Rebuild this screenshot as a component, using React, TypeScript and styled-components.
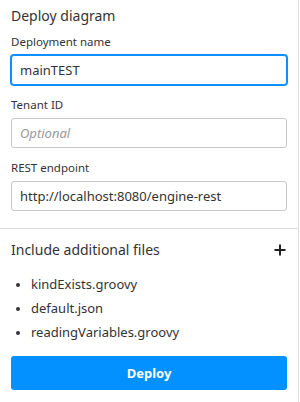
import React from "react";
import styled, { createGlobalStyle } from "styled-components";

const Global = createGlobalStyle`
  html, body { margin: 0; padding: 0; background: #fff; }
  body { font-family: "Noto Sans", "Open Sans", sans-serif; color: #333; }
  * { box-sizing: border-box; }
`;

const Panel = styled.div`
  width: 299px;
  height: 402px;
  border-right: 1px solid #dcdcdc;
  display: flex;
  flex-direction: column;
  background: #fff;
`;

const Section = styled.div<{ $top: number; $bottom: number; $border?: boolean }>`
  padding: ${(p) => p.$top}px 11px ${(p) => p.$bottom}px 11px;
  border-bottom: ${(p) => (p.$border ? "1px solid #dcdcdc" : "none")};
  display: flex;
  flex-direction: column;
`;

const Title = styled.h2`
  margin: 0;
  font-size: 14px;
  line-height: 20px;
  font-weight: 400;
  color: #333;
`;

const Field = styled.div<{ $top: number }>`
  display: flex;
  flex-direction: column;
  gap: 5px;
  margin-top: ${(p) => p.$top}px;
`;

const Label = styled.label`
  font-size: 11.5px;
  line-height: 16px;
  color: #333;
`;

const Input = styled.input<{ $focused?: boolean }>`
  height: 30px;
  width: 100%;
  border: 1px solid ${(p) => (p.$focused ? "#0d8fff" : "#c8c8c8")};
  box-shadow: ${(p) => (p.$focused ? "0 0 0 1px #0d8fff" : "none")};
  border-radius: 3px;
  padding: 0 8px;
  font-family: inherit;
  font-size: 13px;
  color: #333;
  caret-color: #222;
  outline: none;
  background: #fff;
  &::placeholder {
    color: #999;
    font-style: italic;
  }
`;

const Header = styled.div`
  display: flex;
  align-items: center;
  justify-content: space-between;
  height: 20px;
`;

const HeaderText = styled.span`
  font-size: 14px;
  line-height: 20px;
  color: #333;
`;

const PlusButton = styled.button`
  border: none;
  background: none;
  padding: 0;
  width: 14px;
  height: 14px;
  display: flex;
  align-items: center;
  justify-content: center;
  cursor: pointer;
`;

const FileList = styled.ul`
  margin: 12px 0 0 0;
  padding-left: 20px;
  list-style: disc;
`;

const FileItem = styled.li`
  font-size: 13px;
  line-height: 24px;
  color: #333;
  &::marker {
    font-size: 11px;
  }
`;

const DeployButton = styled.button`
  margin-top: 12px;
  height: 34px;
  width: 100%;
  border: none;
  border-radius: 3px;
  background: #0391ff;
  color: #fff;
  font-family: inherit;
  font-size: 13px;
  font-weight: 700;
  cursor: pointer;
`;

export default function App() {
  return (
    <>
      <Global />
      <Panel>
        <Section $top={6} $bottom={17} $border>
          <Title>Deploy diagram</Title>
          <Field $top={8}>
            <Label>Deployment name</Label>
            <Input $focused autoFocus defaultValue="mainTEST" />
          </Field>
          <Field $top={12}>
            <Label>Tenant ID</Label>
            <Input placeholder="Optional" />
          </Field>
          <Field $top={12}>
            <Label>REST endpoint</Label>
            <Input defaultValue="http://localhost:8080/engine-rest" />
          </Field>
        </Section>
        <Section $top={11} $bottom={0}>
          <Header>
            <HeaderText>Include additional files</HeaderText>
            <PlusButton aria-label="Add file">
              <svg width="12" height="12" viewBox="0 0 12 12">
                <path d="M6 0.5V11.5M0.5 6H11.5" stroke="#222" strokeWidth="2" />
              </svg>
            </PlusButton>
          </Header>
          <FileList>
            <FileItem>kindExists.groovy</FileItem>
            <FileItem>default.json</FileItem>
            <FileItem>readingVariables.groovy</FileItem>
          </FileList>
          <DeployButton>Deploy</DeployButton>
        </Section>
      </Panel>
    </>
  );
}
